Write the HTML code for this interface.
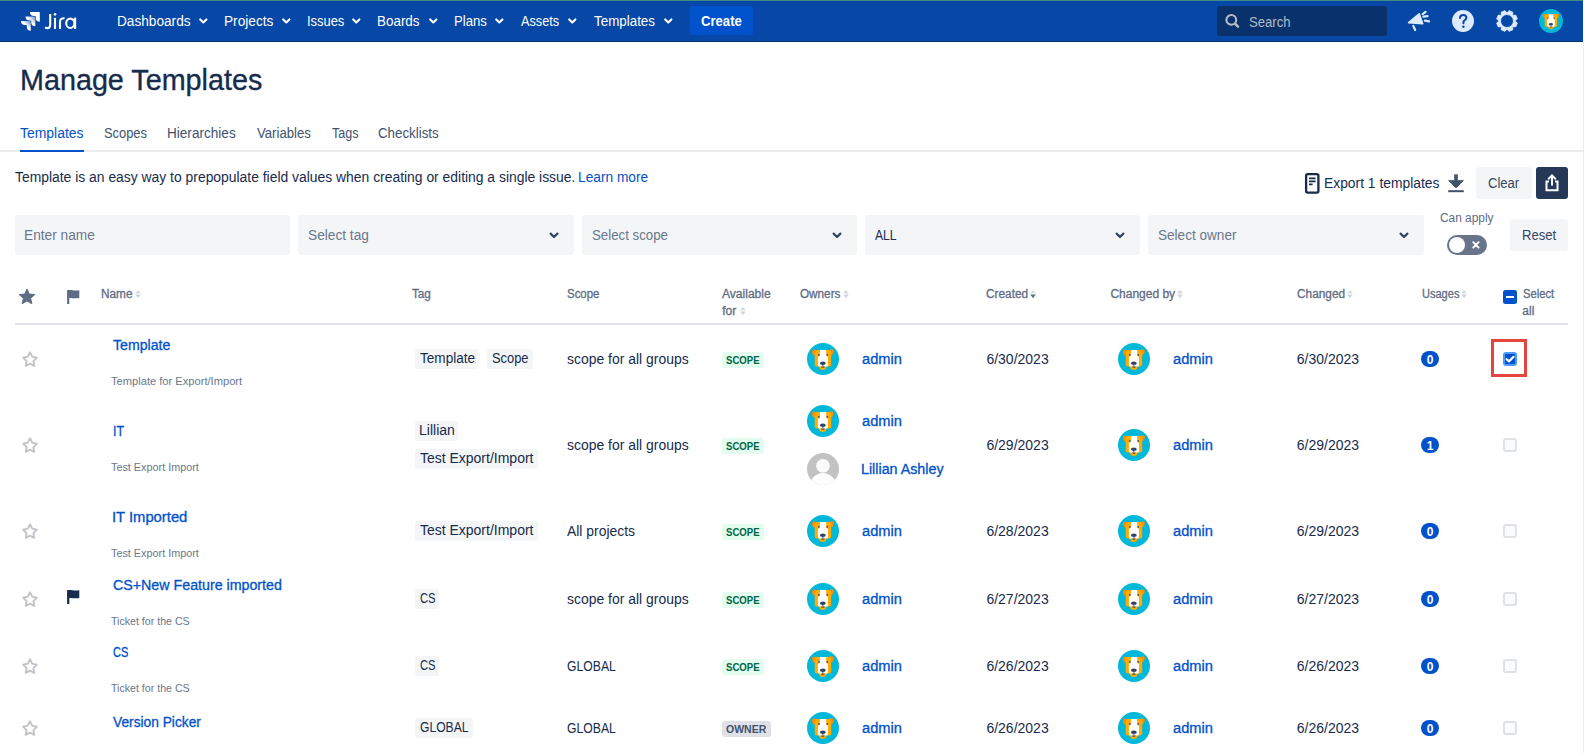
<!DOCTYPE html>
<html><head><meta charset="utf-8"><title>Manage Templates</title>
<style>
html,body{margin:0;padding:0;}
body{width:1584px;height:753px;overflow:hidden;position:relative;background:#fff;font-family:"Liberation Sans", sans-serif;}
.t{position:absolute;white-space:nowrap;}
.r{position:absolute;}
.s{position:absolute;overflow:visible;}
</style></head><body>
<div class="r" style="left:0px;top:0px;width:1583px;height:42px;background:#0747a6;border-radius:0px;"></div>
<div class="r" style="left:0px;top:0px;width:1583px;height:1px;background:#3f8a82;border-radius:0px;"></div>
<div class="r" style="left:0px;top:41px;width:1583px;height:1px;background:#083373;border-radius:0px;"></div>
<div class="r" style="left:1583px;top:42px;width:1px;height:711px;background:#ebecf0;border-radius:0px;"></div>
<svg class="s" style="left:21px;top:12.1px;" width="18.8" height="18.8" viewBox="0 0 24 24"><defs><linearGradient id="lg1" x1="0.98" y1="0.02" x2="0.4" y2="0.6"><stop offset="0.05" stop-color="#fff" stop-opacity="0.4"/><stop offset="0.75" stop-color="#fff"/></linearGradient></defs>
<path d="M23.013 0H11.455a5.215 5.215 0 0 0 5.215 5.215h2.129v2.057A5.215 5.215 0 0 0 24 12.483V1.005A1.001 1.001 0 0 0 23.013 0Z" fill="#fff"/>
<path transform="translate(5.736 5.757)" d="M11.558 0H0a5.215 5.215 0 0 0 5.215 5.214h2.129v2.058a5.218 5.218 0 0 0 5.215 5.214V1.001A1.001 1.001 0 0 0 11.558 0Z" fill="url(#lg1)"/>
<path transform="translate(0 11.513)" d="M11.571 0H0a5.218 5.218 0 0 0 5.232 5.215h2.13v2.057A5.215 5.215 0 0 0 12.575 12.487V1.005A1.005 1.005 0 0 0 11.571 0Z" fill="url(#lg1)"/></svg>
<svg class="s" style="left:40px;top:8px;" width="40" height="26" viewBox="0 0 40 26"><g fill="none" stroke="#fff" stroke-width="2.1"><path d="M10.2 6 V17 Q10.2 20.1 7.6 20.1 Q6 20.1 5.2 19.2"/><path d="M15 9.8 V21"/><path d="M20 21 V14 Q20 9.9 24.6 10.2"/><path d="M35.1 9.6 V21"/><ellipse cx="30.3" cy="15.3" rx="4.1" ry="4.7"/></g><circle cx="15" cy="6.3" r="1.35" fill="#fff"/></svg>
<div class="t " id="k0" style="left:116.73px;top:10.80px;font-size:14px;line-height:20px;color:#fff;font-weight:400;transform:scaleX(0.9746);transform-origin:0 50%;">Dashboards</div>
<svg class="s" style="left:199px;top:17.5px;" width="9" height="7" viewBox="0 0 9 7"><path d="M1.2 1.4 L4.3 4.5 L7.4 1.4" stroke="#fff" stroke-width="2.1" fill="none" stroke-linecap="round" stroke-linejoin="round"/></svg>
<div class="t " id="k1" style="left:223.82px;top:10.80px;font-size:14px;line-height:20px;color:#fff;font-weight:400;transform:scaleX(0.9764);transform-origin:0 50%;">Projects</div>
<svg class="s" style="left:282.3px;top:17.5px;" width="9" height="7" viewBox="0 0 9 7"><path d="M1.2 1.4 L4.3 4.5 L7.4 1.4" stroke="#fff" stroke-width="2.1" fill="none" stroke-linecap="round" stroke-linejoin="round"/></svg>
<div class="t " id="k2" style="left:306.68px;top:10.80px;font-size:14px;line-height:20px;color:#fff;font-weight:400;transform:scaleX(0.9224);transform-origin:0 50%;">Issues</div>
<svg class="s" style="left:352px;top:17.5px;" width="9" height="7" viewBox="0 0 9 7"><path d="M1.2 1.4 L4.3 4.5 L7.4 1.4" stroke="#fff" stroke-width="2.1" fill="none" stroke-linecap="round" stroke-linejoin="round"/></svg>
<div class="t " id="k3" style="left:377.44px;top:10.80px;font-size:14px;line-height:20px;color:#fff;font-weight:400;transform:scaleX(0.9594);transform-origin:0 50%;">Boards</div>
<svg class="s" style="left:429px;top:17.5px;" width="9" height="7" viewBox="0 0 9 7"><path d="M1.2 1.4 L4.3 4.5 L7.4 1.4" stroke="#fff" stroke-width="2.1" fill="none" stroke-linecap="round" stroke-linejoin="round"/></svg>
<div class="t " id="k4" style="left:453.76px;top:10.80px;font-size:14px;line-height:20px;color:#fff;font-weight:400;transform:scaleX(0.9377);transform-origin:0 50%;">Plans</div>
<svg class="s" style="left:495.3px;top:17.5px;" width="9" height="7" viewBox="0 0 9 7"><path d="M1.2 1.4 L4.3 4.5 L7.4 1.4" stroke="#fff" stroke-width="2.1" fill="none" stroke-linecap="round" stroke-linejoin="round"/></svg>
<div class="t " id="k5" style="left:520.90px;top:10.80px;font-size:14px;line-height:20px;color:#fff;font-weight:400;transform:scaleX(0.9068);transform-origin:0 50%;">Assets</div>
<svg class="s" style="left:568px;top:17.5px;" width="9" height="7" viewBox="0 0 9 7"><path d="M1.2 1.4 L4.3 4.5 L7.4 1.4" stroke="#fff" stroke-width="2.1" fill="none" stroke-linecap="round" stroke-linejoin="round"/></svg>
<div class="t " id="k6" style="left:594.30px;top:10.80px;font-size:14px;line-height:20px;color:#fff;font-weight:400;transform:scaleX(0.9560);transform-origin:0 50%;">Templates</div>
<svg class="s" style="left:664px;top:17.5px;" width="9" height="7" viewBox="0 0 9 7"><path d="M1.2 1.4 L4.3 4.5 L7.4 1.4" stroke="#fff" stroke-width="2.1" fill="none" stroke-linecap="round" stroke-linejoin="round"/></svg>
<div class="r" style="left:690px;top:6px;width:63px;height:29px;background:#0052cc;border-radius:3px;"></div>
<div class="t " id="k7" style="left:701.00px;top:11.00px;font-size:14px;line-height:20px;color:#fff;font-weight:700;transform:scaleX(0.9362);transform-origin:0 50%;">Create</div>
<div class="r" style="left:1217px;top:6px;width:170px;height:30px;background:#09326c;border-radius:3px;"></div>
<svg class="s" style="left:1224px;top:13px;" width="17" height="17" viewBox="0 0 17 17"><circle cx="7.3" cy="6.9" r="4.9" stroke="#b3bac5" stroke-width="2.1" fill="none"/><path d="M10.9 10.5 L14 13.6" stroke="#b3bac5" stroke-width="2.5" stroke-linecap="round"/></svg>
<div class="t " id="k8" style="left:1249.40px;top:11.50px;font-size:14px;line-height:20px;color:#b3bac5;font-weight:400;transform:scaleX(0.9364);transform-origin:0 50%;">Search</div>
<svg class="s" style="left:1406px;top:10px;" width="26" height="22" viewBox="0 0 26 22"><path d="M2.6 12.6 L13.2 3.8 L16.7 13.7 Z" fill="#deebff" stroke="#deebff" stroke-width="1.6" stroke-linejoin="round"/>
<path d="M7.3 15.9 L9.2 20" stroke="#deebff" stroke-width="2.2" stroke-linecap="round"/>
<path d="M16.6 4.2 L19.6 1.9 M17.4 6.7 L21.6 6.1 M18.9 10.7 L23.1 11.4" stroke="#deebff" stroke-width="2.2" stroke-linecap="round"/></svg>
<svg class="s" style="left:1452px;top:10px;" width="22" height="22" viewBox="0 0 22 22"><circle cx="11" cy="11" r="11" fill="#deebff"/><path d="M8 8.1 C8 6 9.4 4.9 11.2 4.9 C13 4.9 14.4 6 14.4 7.7 C14.4 9.6 12.2 10 11.5 11.7 L11.4 13.3" stroke="#0747a6" stroke-width="2" fill="none" stroke-linecap="round"/><circle cx="11.4" cy="16.7" r="1.25" fill="#0747a6"/></svg>
<svg class="s" style="left:1496px;top:10.3px;" width="22" height="22" viewBox="0 0 22 22"><path d="M19.67 11.68 L21.41 13.02 L19.79 16.93 L17.62 16.65 L16.65 17.62 L16.93 19.79 L13.02 21.41 L11.68 19.67 L10.32 19.67 L8.98 21.41 L5.07 19.79 L5.35 17.62 L4.38 16.65 L2.21 16.93 L0.59 13.02 L2.33 11.68 L2.33 10.32 L0.59 8.98 L2.21 5.07 L4.38 5.35 L5.35 4.38 L5.07 2.21 L8.98 0.59 L10.32 2.33 L11.68 2.33 L13.02 0.59 L16.93 2.21 L16.65 4.38 L17.62 5.35 L19.79 5.07 L21.41 8.98 L19.67 10.32Z M11 4.6 A6.4 6.4 0 1 0 11 17.4 A6.4 6.4 0 1 0 11 4.6 Z" fill="#deebff" fill-rule="evenodd" stroke="#deebff" stroke-width="0.7" stroke-linejoin="round"/></svg>
<svg class="s" style="left:1539px;top:9px;" width="24" height="24" viewBox="0 0 32 32"><circle cx="16" cy="16" r="16" fill="#00b8d9"/>
<ellipse cx="7.4" cy="9.6" rx="2.3" ry="3" transform="rotate(-20 7.4 9.6)" fill="#ff8b00"/><ellipse cx="24.3" cy="9.1" rx="2.3" ry="3" transform="rotate(20 24.3 9.1)" fill="#ff8b00"/>
<rect x="7.7" y="7" width="16.5" height="16.6" rx="2" fill="#ffab00"/>
<ellipse cx="15.8" cy="24.2" rx="3.5" ry="2.7" fill="#ffab00"/>
<path d="M13.1 7.1 H19.1 L19.3 11.5 Q19.6 13.5 21 13.9 V22.3 Q21 23.6 19.5 23.6 H12.4 Q10.9 23.6 10.9 22.3 V13.9 Q12.4 13.5 12.8 11.5 Z" fill="#fff"/>
<circle cx="11.9" cy="11.9" r="0.95" fill="#42526e"/><circle cx="20.2" cy="11.9" r="0.95" fill="#42526e"/>
<ellipse cx="15.9" cy="20.3" rx="2.9" ry="1.7" fill="#344563"/><path d="M15.9 21.5 V23.8 M14.2 23.9 Q15.9 25 17.6 23.9" stroke="#344563" stroke-width="0.9" fill="none"/></svg>
<div class="t " id="k9" style="left:20.32px;top:59.80px;font-size:29px;line-height:41px;color:#172b4d;font-weight:400;-webkit-text-stroke:0.35px #172b4d;transform:scaleX(0.9908);transform-origin:0 50%;">Manage Templates</div>
<div class="t " id="k10" style="left:20.30px;top:123.00px;font-size:14px;line-height:20px;color:#0052cc;font-weight:400;transform:scaleX(0.9968);transform-origin:0 50%;">Templates</div>
<div class="t " id="k11" style="left:104.30px;top:123.00px;font-size:14px;line-height:20px;color:#42526e;font-weight:400;transform:scaleX(0.9187);transform-origin:0 50%;">Scopes</div>
<div class="t " id="k12" style="left:167.43px;top:123.00px;font-size:14px;line-height:20px;color:#42526e;font-weight:400;transform:scaleX(0.9699);transform-origin:0 50%;">Hierarchies</div>
<div class="t " id="k13" style="left:256.80px;top:123.00px;font-size:14px;line-height:20px;color:#42526e;font-weight:400;transform:scaleX(0.9385);transform-origin:0 50%;">Variables</div>
<div class="t " id="k14" style="left:331.60px;top:123.00px;font-size:14px;line-height:20px;color:#42526e;font-weight:400;transform:scaleX(0.8961);transform-origin:0 50%;">Tags</div>
<div class="t " id="k15" style="left:378.30px;top:123.00px;font-size:14px;line-height:20px;color:#42526e;font-weight:400;transform:scaleX(0.9515);transform-origin:0 50%;">Checklists</div>
<div class="r" style="left:0px;top:150px;width:1583px;height:2px;background:#ebecf0;border-radius:0px;"></div>
<div class="r" style="left:20px;top:150px;width:64px;height:2px;background:#0052cc;border-radius:0px;"></div>
<div class="t " id="k16" style="left:14.60px;top:167.00px;font-size:14px;line-height:20px;color:#172b4d;font-weight:400;transform:scaleX(0.9918);transform-origin:0 50%;">Template is an easy way to prepopulate field values when creating or editing a single issue.</div>
<div class="t " id="k17" style="left:577.92px;top:167.00px;font-size:14px;line-height:20px;color:#0052cc;font-weight:400;transform:scaleX(0.9801);transform-origin:0 50%;">Learn more</div>
<svg class="s" style="left:1304.7px;top:172.6px;" width="15" height="21" viewBox="0 0 15 21"><rect x="1.1" y="1.1" width="12.3" height="18.6" rx="1.6" stroke="#172b4d" stroke-width="2.3" fill="none"/><path d="M4 5.3 H10.6 M4 8.3 H10.6 M4 11.3 H7.6" stroke="#172b4d" stroke-width="1.7"/></svg>
<div class="t " id="k18" style="left:1323.61px;top:173.00px;font-size:14px;line-height:20px;color:#172b4d;font-weight:400;transform:scaleX(0.9886);transform-origin:0 50%;">Export 1 templates</div>
<svg class="s" style="left:1447px;top:173px;" width="18" height="20" viewBox="0 0 18 20"><path d="M9 1.3 V10" stroke="#42526e" stroke-width="3.6"/><path d="M1.6 7.6 L9 15 L16.4 7.6 Z" fill="#42526e" stroke="#42526e" stroke-width="0.8" stroke-linejoin="round"/><rect x="1.2" y="17.2" width="15.6" height="2" fill="#42526e"/></svg>
<div class="r" style="left:1476px;top:167px;width:56px;height:32px;background:#f4f5f7;border-radius:3px;"></div>
<div class="t " id="k19" style="left:1488.00px;top:173.00px;font-size:14px;line-height:20px;color:#344563;font-weight:400;transform:scaleX(0.9321);transform-origin:0 50%;">Clear</div>
<div class="r" style="left:1536px;top:167px;width:32px;height:32px;background:#253858;border-radius:3px;"></div>
<svg class="s" style="left:1542px;top:173px;" width="20" height="20" viewBox="0 0 20 20"><path d="M10 2.5 V12.5" stroke="#fff" stroke-width="2"/><path d="M6.2 6.2 L10 2.4 L13.8 6.2" stroke="#fff" stroke-width="2" fill="none" stroke-linejoin="miter"/><path d="M7 8.5 H4.5 V17.3 H15.5 V8.5 H13" stroke="#fff" stroke-width="2" fill="none"/></svg>
<div class="r" style="left:15px;top:215px;width:275px;height:40px;background:#f4f5f7;border-radius:3px;"></div>
<div class="t " id="k20" style="left:24.32px;top:225.20px;font-size:14px;line-height:20px;color:#6b778c;font-weight:400;transform:scaleX(0.9778);transform-origin:0 50%;">Enter name</div>
<div class="r" style="left:298px;top:215px;width:276px;height:40px;background:#f4f5f7;border-radius:3px;"></div>
<div class="t " id="k21" style="left:308.30px;top:225.20px;font-size:14px;line-height:20px;color:#6b778c;font-weight:400;transform:scaleX(0.9776);transform-origin:0 50%;">Select tag</div>
<svg class="s" style="left:548.5px;top:232px;" width="10" height="8" viewBox="0 0 10 8"><path d="M1.6 1.6 L5 5 L8.4 1.6" stroke="#344563" stroke-width="2.2" fill="none" stroke-linecap="round" stroke-linejoin="round"/></svg>
<div class="r" style="left:582px;top:215px;width:275px;height:40px;background:#f4f5f7;border-radius:3px;"></div>
<div class="t " id="k22" style="left:592.30px;top:225.20px;font-size:14px;line-height:20px;color:#6b778c;font-weight:400;transform:scaleX(0.9468);transform-origin:0 50%;">Select scope</div>
<svg class="s" style="left:831.5px;top:232px;" width="10" height="8" viewBox="0 0 10 8"><path d="M1.6 1.6 L5 5 L8.4 1.6" stroke="#344563" stroke-width="2.2" fill="none" stroke-linecap="round" stroke-linejoin="round"/></svg>
<div class="r" style="left:865px;top:215px;width:275px;height:40px;background:#f4f5f7;border-radius:3px;"></div>
<div class="t " id="k23" style="left:875.30px;top:225.20px;font-size:14px;line-height:20px;color:#172b4d;font-weight:400;transform:scaleX(0.8677);transform-origin:0 50%;">ALL</div>
<svg class="s" style="left:1114.5px;top:232px;" width="10" height="8" viewBox="0 0 10 8"><path d="M1.6 1.6 L5 5 L8.4 1.6" stroke="#344563" stroke-width="2.2" fill="none" stroke-linecap="round" stroke-linejoin="round"/></svg>
<div class="r" style="left:1148px;top:215px;width:276px;height:40px;background:#f4f5f7;border-radius:3px;"></div>
<div class="t " id="k24" style="left:1158.30px;top:225.20px;font-size:14px;line-height:20px;color:#6b778c;font-weight:400;transform:scaleX(0.9696);transform-origin:0 50%;">Select owner</div>
<svg class="s" style="left:1398.5px;top:232px;" width="10" height="8" viewBox="0 0 10 8"><path d="M1.6 1.6 L5 5 L8.4 1.6" stroke="#344563" stroke-width="2.2" fill="none" stroke-linecap="round" stroke-linejoin="round"/></svg>
<div class="t " id="k25" style="left:1440.00px;top:209.50px;font-size:12px;line-height:17px;color:#5e6c84;font-weight:400;transform:scaleX(0.9901);transform-origin:0 50%;">Can apply</div>
<div class="r" style="left:1447px;top:235px;width:40px;height:20px;background:#67748a;border-radius:10px;"></div>
<div class="r" style="left:1449px;top:237px;width:16px;height:16px;border-radius:8px;background:#fff;"></div>
<svg class="s" style="left:1471px;top:240px;" width="10" height="10" viewBox="0 0 10 10"><path d="M2.2 2.2 L7.6 7.6 M7.6 2.2 L2.2 7.6" stroke="#fff" stroke-width="1.9" stroke-linecap="round"/></svg>
<div class="r" style="left:1510px;top:219px;width:58px;height:32px;background:#f4f5f7;border-radius:3px;"></div>
<div class="t " id="k26" style="left:1521.57px;top:225.00px;font-size:14px;line-height:20px;color:#344563;font-weight:400;transform:scaleX(0.9332);transform-origin:0 50%;">Reset</div>
<svg class="s" style="left:18px;top:288px;" width="18" height="17" viewBox="0 0 18 17"><path d="M9 1 L11.3 6.1 L16.8 6.6 L12.6 10.3 L13.9 15.8 L9 12.9 L4.1 15.8 L5.4 10.3 L1.2 6.6 L6.7 6.1 Z" fill="#5e6c84" stroke="#5e6c84" stroke-width="1" stroke-linejoin="round"/></svg>
<svg class="s" style="left:66px;top:289px;" width="15" height="16" viewBox="0 0 15 16"><path d="M2.2 1.2 V15" stroke="#5e6c84" stroke-width="2.2"/><path d="M1.6 1.2 C5 0.2 8 2.3 13.3 1.2 V9 C8 10 5 8.3 1.6 9.3 Z" fill="#5e6c84"/></svg>
<div class="t " id="k27" style="left:101.30px;top:285.80px;font-size:12px;line-height:17px;color:#5e6c84;font-weight:400;-webkit-text-stroke:0.3px #5e6c84;transform:scaleX(0.9834);transform-origin:0 50%;">Name</div>
<svg class="s" style="left:135.2px;top:289.8px;" width="6" height="9" viewBox="0 0 6 9"><path d="M0.2 3.3 L3 0.2 L5.8 3.3 Z" fill="#d0d4db"/><path d="M0.2 4.6 L3 8.3 L5.8 4.6 Z" fill="#d0d4db"/></svg>
<div class="t " id="k28" style="left:411.60px;top:285.80px;font-size:12px;line-height:17px;color:#5e6c84;font-weight:400;-webkit-text-stroke:0.3px #5e6c84;transform:scaleX(0.9746);transform-origin:0 50%;">Tag</div>
<div class="t " id="k29" style="left:566.70px;top:285.80px;font-size:12px;line-height:17px;color:#5e6c84;font-weight:400;-webkit-text-stroke:0.3px #5e6c84;transform:scaleX(0.9548);transform-origin:0 50%;">Scope</div>
<div class="t " id="k30" style="left:722.20px;top:285.80px;font-size:12px;line-height:17px;color:#5e6c84;font-weight:400;-webkit-text-stroke:0.3px #5e6c84;transform:scaleX(1.0040);transform-origin:0 50%;">Available</div>
<div class="t " style="left:722.20px;top:302.60px;font-size:12px;line-height:17px;color:#5e6c84;font-weight:400;-webkit-text-stroke:0.3px #5e6c84;">for</div>
<svg class="s" style="left:740.4px;top:306.8px;" width="6" height="9" viewBox="0 0 6 9"><path d="M0.2 3.3 L3 0.2 L5.8 3.3 Z" fill="#d0d4db"/><path d="M0.2 4.6 L3 8.3 L5.8 4.6 Z" fill="#d0d4db"/></svg>
<div class="t " id="k31" style="left:800.00px;top:285.80px;font-size:12px;line-height:17px;color:#5e6c84;font-weight:400;-webkit-text-stroke:0.3px #5e6c84;transform:scaleX(0.9772);transform-origin:0 50%;">Owners</div>
<svg class="s" style="left:843.4px;top:289.8px;" width="6" height="9" viewBox="0 0 6 9"><path d="M0.2 3.3 L3 0.2 L5.8 3.3 Z" fill="#d0d4db"/><path d="M0.2 4.6 L3 8.3 L5.8 4.6 Z" fill="#d0d4db"/></svg>
<div class="t " id="k32" style="left:986.20px;top:285.80px;font-size:12px;line-height:17px;color:#5e6c84;font-weight:400;-webkit-text-stroke:0.3px #5e6c84;transform:scaleX(0.9853);transform-origin:0 50%;">Created</div>
<svg class="s" style="left:1030px;top:289.6px;" width="6" height="9" viewBox="0 0 6 9"><path d="M0.2 3.3 L3 0.2 L5.8 3.3 Z" fill="#d0d4db"/><path d="M0.2 4.6 L3 8.3 L5.8 4.6 Z" fill="#5e6c84"/></svg>
<div class="t " id="k33" style="left:1110.40px;top:285.80px;font-size:12px;line-height:17px;color:#5e6c84;font-weight:400;-webkit-text-stroke:0.3px #5e6c84;">Changed by</div>
<svg class="s" style="left:1177.2px;top:289.8px;" width="6" height="9" viewBox="0 0 6 9"><path d="M0.2 3.3 L3 0.2 L5.8 3.3 Z" fill="#d0d4db"/><path d="M0.2 4.6 L3 8.3 L5.8 4.6 Z" fill="#d0d4db"/></svg>
<div class="t " id="k34" style="left:1296.90px;top:285.80px;font-size:12px;line-height:17px;color:#5e6c84;font-weight:400;-webkit-text-stroke:0.3px #5e6c84;transform:scaleX(0.9868);transform-origin:0 50%;">Changed</div>
<svg class="s" style="left:1347px;top:289.8px;" width="6" height="9" viewBox="0 0 6 9"><path d="M0.2 3.3 L3 0.2 L5.8 3.3 Z" fill="#d0d4db"/><path d="M0.2 4.6 L3 8.3 L5.8 4.6 Z" fill="#d0d4db"/></svg>
<div class="t " id="k35" style="left:1421.50px;top:285.80px;font-size:12px;line-height:17px;color:#5e6c84;font-weight:400;-webkit-text-stroke:0.3px #5e6c84;transform:scaleX(0.9192);transform-origin:0 50%;">Usages</div>
<svg class="s" style="left:1461.2px;top:289.8px;" width="6" height="9" viewBox="0 0 6 9"><path d="M0.2 3.3 L3 0.2 L5.8 3.3 Z" fill="#d0d4db"/><path d="M0.2 4.6 L3 8.3 L5.8 4.6 Z" fill="#d0d4db"/></svg>
<div class="r" style="left:1503px;top:290px;width:14px;height:14px;background:#0052cc;border-radius:2.5px;"></div>
<div class="r" style="left:1506px;top:296px;width:8px;height:2px;background:#fff;border-radius:0px;"></div>
<div class="t " id="k36" style="left:1522.80px;top:285.80px;font-size:12px;line-height:17px;color:#5e6c84;font-weight:400;-webkit-text-stroke:0.3px #5e6c84;transform:scaleX(0.9319);transform-origin:0 50%;">Select</div>
<div class="t " style="left:1522.30px;top:302.60px;font-size:12px;line-height:17px;color:#5e6c84;font-weight:400;-webkit-text-stroke:0.3px #5e6c84;">all</div>
<div class="r" style="left:15px;top:323px;width:1553px;height:2px;background:#dfe1e6;border-radius:0px;"></div>
<svg class="s" style="left:21px;top:350px;" width="18" height="18" viewBox="0 0 18 18"><path d="M9 2.3 L11.2 6.6 L15.9 7.7 L12.4 11.2 L13.2 15.9 L9 13.7 L4.8 15.9 L5.6 11.2 L2.1 7.7 L6.8 6.6 Z" fill="none" stroke="#c2c4c8" stroke-width="1.9" stroke-linejoin="round"/></svg>
<div class="t " id="k37" style="left:113.40px;top:335.00px;font-size:14px;line-height:20px;color:#0052cc;font-weight:400;-webkit-text-stroke:0.3px #0052cc;transform:scaleX(1.0102);transform-origin:0 50%;">Template</div>
<div class="t " id="k38" style="left:111.40px;top:373.50px;font-size:11px;line-height:15px;color:#6b778c;font-weight:400;transform:scaleX(1.0120);transform-origin:0 50%;">Template for Export/Import</div>
<div class="r" style="left:415.4px;top:348.5px;width:63px;height:20px;background:#f4f5f7;border-radius:3px;"></div>
<div class="t " id="k39" style="left:420.10px;top:347.90px;font-size:14px;line-height:20px;color:#172b4d;font-weight:400;transform:scaleX(0.9698);transform-origin:0 50%;">Template</div>
<div class="r" style="left:487.2px;top:348.5px;width:45.6px;height:20px;background:#f4f5f7;border-radius:3px;"></div>
<div class="t " id="k40" style="left:491.90px;top:347.90px;font-size:14px;line-height:20px;color:#172b4d;font-weight:400;transform:scaleX(0.9196);transform-origin:0 50%;">Scope</div>
<div class="t " id="k41" style="left:566.80px;top:349.00px;font-size:14px;line-height:20px;color:#172b4d;font-weight:400;transform:scaleX(0.9953);transform-origin:0 50%;">scope for all groups</div>
<div class="r" style="left:722px;top:352px;width:42px;height:15.6px;background:#e3fcef;border-radius:3px;"></div>
<div class="t " id="k42" style="left:726.20px;top:352.50px;font-size:11px;line-height:15px;color:#006644;font-weight:700;transform:scaleX(0.8723);transform-origin:0 50%;">SCOPE</div>
<svg class="s" style="left:807px;top:343px;" width="32" height="32" viewBox="0 0 32 32"><circle cx="16" cy="16" r="16" fill="#00b8d9"/>
<ellipse cx="7.4" cy="9.6" rx="2.3" ry="3" transform="rotate(-20 7.4 9.6)" fill="#ff8b00"/><ellipse cx="24.3" cy="9.1" rx="2.3" ry="3" transform="rotate(20 24.3 9.1)" fill="#ff8b00"/>
<rect x="7.7" y="7" width="16.5" height="16.6" rx="2" fill="#ffab00"/>
<ellipse cx="15.8" cy="24.2" rx="3.5" ry="2.7" fill="#ffab00"/>
<path d="M13.1 7.1 H19.1 L19.3 11.5 Q19.6 13.5 21 13.9 V22.3 Q21 23.6 19.5 23.6 H12.4 Q10.9 23.6 10.9 22.3 V13.9 Q12.4 13.5 12.8 11.5 Z" fill="#fff"/>
<circle cx="11.9" cy="11.9" r="0.95" fill="#42526e"/><circle cx="20.2" cy="11.9" r="0.95" fill="#42526e"/>
<ellipse cx="15.9" cy="20.3" rx="2.9" ry="1.7" fill="#344563"/><path d="M15.9 21.5 V23.8 M14.2 23.9 Q15.9 25 17.6 23.9" stroke="#344563" stroke-width="0.9" fill="none"/></svg>
<div class="t " id="k43" style="left:862.00px;top:349.00px;font-size:14px;line-height:20px;color:#0052cc;font-weight:400;-webkit-text-stroke:0.3px #0052cc;transform:scaleX(1.0470);transform-origin:0 50%;">admin</div>
<div class="t " id="k44" style="left:986.40px;top:349.00px;font-size:14px;line-height:20px;color:#172b4d;font-weight:400;">6/30/2023</div>
<svg class="s" style="left:1118px;top:343px;" width="32" height="32" viewBox="0 0 32 32"><circle cx="16" cy="16" r="16" fill="#00b8d9"/>
<ellipse cx="7.4" cy="9.6" rx="2.3" ry="3" transform="rotate(-20 7.4 9.6)" fill="#ff8b00"/><ellipse cx="24.3" cy="9.1" rx="2.3" ry="3" transform="rotate(20 24.3 9.1)" fill="#ff8b00"/>
<rect x="7.7" y="7" width="16.5" height="16.6" rx="2" fill="#ffab00"/>
<ellipse cx="15.8" cy="24.2" rx="3.5" ry="2.7" fill="#ffab00"/>
<path d="M13.1 7.1 H19.1 L19.3 11.5 Q19.6 13.5 21 13.9 V22.3 Q21 23.6 19.5 23.6 H12.4 Q10.9 23.6 10.9 22.3 V13.9 Q12.4 13.5 12.8 11.5 Z" fill="#fff"/>
<circle cx="11.9" cy="11.9" r="0.95" fill="#42526e"/><circle cx="20.2" cy="11.9" r="0.95" fill="#42526e"/>
<ellipse cx="15.9" cy="20.3" rx="2.9" ry="1.7" fill="#344563"/><path d="M15.9 21.5 V23.8 M14.2 23.9 Q15.9 25 17.6 23.9" stroke="#344563" stroke-width="0.9" fill="none"/></svg>
<div class="t " id="k45" style="left:1172.70px;top:349.00px;font-size:14px;line-height:20px;color:#0052cc;font-weight:400;-webkit-text-stroke:0.3px #0052cc;transform:scaleX(1.0470);transform-origin:0 50%;">admin</div>
<div class="t " id="k46" style="left:1296.80px;top:349.00px;font-size:14px;line-height:20px;color:#172b4d;font-weight:400;">6/30/2023</div>
<div class="r" style="left:1421px;top:351px;width:18px;height:16px;background:#0052cc;border-radius:8px;"></div>
<div class="t " style="left:1426.80px;top:351.80px;font-size:12px;line-height:17px;color:#fff;font-weight:700;">0</div>
<div class="r" style="left:1503px;top:352px;width:14px;height:14px;background:#4c9aff;border-radius:3px;"></div>
<div class="r" style="left:1505px;top:354px;width:10px;height:10px;background:#0052cc;border-radius:1px;"></div>
<svg class="s" style="left:1503px;top:352px;" width="14" height="14" viewBox="0 0 14 14"><path d="M3.6 7.2 L6 9.4 L10.6 4.8" stroke="#fff" stroke-width="2.2" fill="none" stroke-linecap="round" stroke-linejoin="round"/></svg>
<div class="r" style="left:1491px;top:339px;width:30px;height:32px;border:3px solid #e5453c;"></div>
<svg class="s" style="left:21px;top:436px;" width="18" height="18" viewBox="0 0 18 18"><path d="M9 2.3 L11.2 6.6 L15.9 7.7 L12.4 11.2 L13.2 15.9 L9 13.7 L4.8 15.9 L5.6 11.2 L2.1 7.7 L6.8 6.6 Z" fill="none" stroke="#c2c4c8" stroke-width="1.9" stroke-linejoin="round"/></svg>
<div class="t " id="k47" style="left:112.51px;top:421.00px;font-size:14px;line-height:20px;color:#0052cc;font-weight:400;-webkit-text-stroke:0.3px #0052cc;transform:scaleX(0.8915);transform-origin:0 50%;">IT</div>
<div class="t " id="k48" style="left:111.40px;top:459.80px;font-size:11px;line-height:15px;color:#6b778c;font-weight:400;transform:scaleX(0.9844);transform-origin:0 50%;">Test Export Import</div>
<div class="r" style="left:415.2px;top:420.8px;width:42.6px;height:20px;background:#f4f5f7;border-radius:3px;"></div>
<div class="t " id="k49" style="left:418.90px;top:420.20px;font-size:14px;line-height:20px;color:#172b4d;font-weight:400;transform:scaleX(1.0025);transform-origin:0 50%;">Lillian</div>
<div class="r" style="left:415.2px;top:448.8px;width:122.4px;height:20px;background:#f4f5f7;border-radius:3px;"></div>
<div class="t " id="k50" style="left:419.90px;top:448.20px;font-size:14px;line-height:20px;color:#172b4d;font-weight:400;">Test Export/Import</div>
<div class="t " id="k51" style="left:566.80px;top:435.00px;font-size:14px;line-height:20px;color:#172b4d;font-weight:400;transform:scaleX(0.9953);transform-origin:0 50%;">scope for all groups</div>
<div class="r" style="left:722px;top:438px;width:42px;height:15.6px;background:#e3fcef;border-radius:3px;"></div>
<div class="t " id="k52" style="left:726.20px;top:438.50px;font-size:11px;line-height:15px;color:#006644;font-weight:700;transform:scaleX(0.8723);transform-origin:0 50%;">SCOPE</div>
<svg class="s" style="left:807px;top:405px;" width="32" height="32" viewBox="0 0 32 32"><circle cx="16" cy="16" r="16" fill="#00b8d9"/>
<ellipse cx="7.4" cy="9.6" rx="2.3" ry="3" transform="rotate(-20 7.4 9.6)" fill="#ff8b00"/><ellipse cx="24.3" cy="9.1" rx="2.3" ry="3" transform="rotate(20 24.3 9.1)" fill="#ff8b00"/>
<rect x="7.7" y="7" width="16.5" height="16.6" rx="2" fill="#ffab00"/>
<ellipse cx="15.8" cy="24.2" rx="3.5" ry="2.7" fill="#ffab00"/>
<path d="M13.1 7.1 H19.1 L19.3 11.5 Q19.6 13.5 21 13.9 V22.3 Q21 23.6 19.5 23.6 H12.4 Q10.9 23.6 10.9 22.3 V13.9 Q12.4 13.5 12.8 11.5 Z" fill="#fff"/>
<circle cx="11.9" cy="11.9" r="0.95" fill="#42526e"/><circle cx="20.2" cy="11.9" r="0.95" fill="#42526e"/>
<ellipse cx="15.9" cy="20.3" rx="2.9" ry="1.7" fill="#344563"/><path d="M15.9 21.5 V23.8 M14.2 23.9 Q15.9 25 17.6 23.9" stroke="#344563" stroke-width="0.9" fill="none"/></svg>
<div class="t " id="k53" style="left:862.00px;top:411.00px;font-size:14px;line-height:20px;color:#0052cc;font-weight:400;-webkit-text-stroke:0.3px #0052cc;transform:scaleX(1.0470);transform-origin:0 50%;">admin</div>
<svg class="s" style="left:807px;top:453px;" width="32" height="32" viewBox="0 0 32 32"><defs><clipPath id="cpg"><circle cx="16" cy="16" r="16"/></clipPath></defs><circle cx="16" cy="16" r="16" fill="#c2c2c2"/><g clip-path="url(#cpg)"><circle cx="16" cy="12.8" r="6.9" fill="#fbfbfb"/><circle cx="16" cy="33" r="13" fill="#fdfdfd"/></g></svg>
<div class="t " id="k54" style="left:860.98px;top:459.00px;font-size:14px;line-height:20px;color:#0052cc;font-weight:400;-webkit-text-stroke:0.3px #0052cc;transform:scaleX(1.0197);transform-origin:0 50%;">Lillian Ashley</div>
<div class="t " id="k55" style="left:986.40px;top:435.00px;font-size:14px;line-height:20px;color:#172b4d;font-weight:400;">6/29/2023</div>
<svg class="s" style="left:1118px;top:429px;" width="32" height="32" viewBox="0 0 32 32"><circle cx="16" cy="16" r="16" fill="#00b8d9"/>
<ellipse cx="7.4" cy="9.6" rx="2.3" ry="3" transform="rotate(-20 7.4 9.6)" fill="#ff8b00"/><ellipse cx="24.3" cy="9.1" rx="2.3" ry="3" transform="rotate(20 24.3 9.1)" fill="#ff8b00"/>
<rect x="7.7" y="7" width="16.5" height="16.6" rx="2" fill="#ffab00"/>
<ellipse cx="15.8" cy="24.2" rx="3.5" ry="2.7" fill="#ffab00"/>
<path d="M13.1 7.1 H19.1 L19.3 11.5 Q19.6 13.5 21 13.9 V22.3 Q21 23.6 19.5 23.6 H12.4 Q10.9 23.6 10.9 22.3 V13.9 Q12.4 13.5 12.8 11.5 Z" fill="#fff"/>
<circle cx="11.9" cy="11.9" r="0.95" fill="#42526e"/><circle cx="20.2" cy="11.9" r="0.95" fill="#42526e"/>
<ellipse cx="15.9" cy="20.3" rx="2.9" ry="1.7" fill="#344563"/><path d="M15.9 21.5 V23.8 M14.2 23.9 Q15.9 25 17.6 23.9" stroke="#344563" stroke-width="0.9" fill="none"/></svg>
<div class="t " id="k56" style="left:1172.70px;top:435.00px;font-size:14px;line-height:20px;color:#0052cc;font-weight:400;-webkit-text-stroke:0.3px #0052cc;transform:scaleX(1.0470);transform-origin:0 50%;">admin</div>
<div class="t " id="k57" style="left:1296.80px;top:435.00px;font-size:14px;line-height:20px;color:#172b4d;font-weight:400;">6/29/2023</div>
<div class="r" style="left:1421px;top:437px;width:18px;height:16px;background:#0052cc;border-radius:8px;"></div>
<div class="t " style="left:1426.80px;top:437.80px;font-size:12px;line-height:17px;color:#fff;font-weight:700;">1</div>
<div class="r" style="left:1503.0px;top:438.2px;width:10px;height:10px;border:2px solid #dfe1e6;border-radius:3px;background:#fafbfc;"></div>
<svg class="s" style="left:21px;top:522px;" width="18" height="18" viewBox="0 0 18 18"><path d="M9 2.3 L11.2 6.6 L15.9 7.7 L12.4 11.2 L13.2 15.9 L9 13.7 L4.8 15.9 L5.6 11.2 L2.1 7.7 L6.8 6.6 Z" fill="none" stroke="#c2c4c8" stroke-width="1.9" stroke-linejoin="round"/></svg>
<div class="t " id="k58" style="left:112.34px;top:507.00px;font-size:14px;line-height:20px;color:#0052cc;font-weight:400;-webkit-text-stroke:0.3px #0052cc;transform:scaleX(1.0560);transform-origin:0 50%;">IT Imported</div>
<div class="t " id="k59" style="left:111.40px;top:545.80px;font-size:11px;line-height:15px;color:#6b778c;font-weight:400;transform:scaleX(0.9844);transform-origin:0 50%;">Test Export Import</div>
<div class="r" style="left:415.2px;top:520.5px;width:122.4px;height:20px;background:#f4f5f7;border-radius:3px;"></div>
<div class="t " id="k60" style="left:419.90px;top:519.90px;font-size:14px;line-height:20px;color:#172b4d;font-weight:400;">Test Export/Import</div>
<div class="t " id="k61" style="left:566.80px;top:521.00px;font-size:14px;line-height:20px;color:#172b4d;font-weight:400;transform:scaleX(0.9932);transform-origin:0 50%;">All projects</div>
<div class="r" style="left:722px;top:524px;width:42px;height:15.6px;background:#e3fcef;border-radius:3px;"></div>
<div class="t " id="k62" style="left:726.20px;top:524.50px;font-size:11px;line-height:15px;color:#006644;font-weight:700;transform:scaleX(0.8723);transform-origin:0 50%;">SCOPE</div>
<svg class="s" style="left:807px;top:515px;" width="32" height="32" viewBox="0 0 32 32"><circle cx="16" cy="16" r="16" fill="#00b8d9"/>
<ellipse cx="7.4" cy="9.6" rx="2.3" ry="3" transform="rotate(-20 7.4 9.6)" fill="#ff8b00"/><ellipse cx="24.3" cy="9.1" rx="2.3" ry="3" transform="rotate(20 24.3 9.1)" fill="#ff8b00"/>
<rect x="7.7" y="7" width="16.5" height="16.6" rx="2" fill="#ffab00"/>
<ellipse cx="15.8" cy="24.2" rx="3.5" ry="2.7" fill="#ffab00"/>
<path d="M13.1 7.1 H19.1 L19.3 11.5 Q19.6 13.5 21 13.9 V22.3 Q21 23.6 19.5 23.6 H12.4 Q10.9 23.6 10.9 22.3 V13.9 Q12.4 13.5 12.8 11.5 Z" fill="#fff"/>
<circle cx="11.9" cy="11.9" r="0.95" fill="#42526e"/><circle cx="20.2" cy="11.9" r="0.95" fill="#42526e"/>
<ellipse cx="15.9" cy="20.3" rx="2.9" ry="1.7" fill="#344563"/><path d="M15.9 21.5 V23.8 M14.2 23.9 Q15.9 25 17.6 23.9" stroke="#344563" stroke-width="0.9" fill="none"/></svg>
<div class="t " id="k63" style="left:862.00px;top:521.00px;font-size:14px;line-height:20px;color:#0052cc;font-weight:400;-webkit-text-stroke:0.3px #0052cc;transform:scaleX(1.0470);transform-origin:0 50%;">admin</div>
<div class="t " id="k64" style="left:986.40px;top:521.00px;font-size:14px;line-height:20px;color:#172b4d;font-weight:400;">6/28/2023</div>
<svg class="s" style="left:1118px;top:515px;" width="32" height="32" viewBox="0 0 32 32"><circle cx="16" cy="16" r="16" fill="#00b8d9"/>
<ellipse cx="7.4" cy="9.6" rx="2.3" ry="3" transform="rotate(-20 7.4 9.6)" fill="#ff8b00"/><ellipse cx="24.3" cy="9.1" rx="2.3" ry="3" transform="rotate(20 24.3 9.1)" fill="#ff8b00"/>
<rect x="7.7" y="7" width="16.5" height="16.6" rx="2" fill="#ffab00"/>
<ellipse cx="15.8" cy="24.2" rx="3.5" ry="2.7" fill="#ffab00"/>
<path d="M13.1 7.1 H19.1 L19.3 11.5 Q19.6 13.5 21 13.9 V22.3 Q21 23.6 19.5 23.6 H12.4 Q10.9 23.6 10.9 22.3 V13.9 Q12.4 13.5 12.8 11.5 Z" fill="#fff"/>
<circle cx="11.9" cy="11.9" r="0.95" fill="#42526e"/><circle cx="20.2" cy="11.9" r="0.95" fill="#42526e"/>
<ellipse cx="15.9" cy="20.3" rx="2.9" ry="1.7" fill="#344563"/><path d="M15.9 21.5 V23.8 M14.2 23.9 Q15.9 25 17.6 23.9" stroke="#344563" stroke-width="0.9" fill="none"/></svg>
<div class="t " id="k65" style="left:1172.70px;top:521.00px;font-size:14px;line-height:20px;color:#0052cc;font-weight:400;-webkit-text-stroke:0.3px #0052cc;transform:scaleX(1.0470);transform-origin:0 50%;">admin</div>
<div class="t " id="k66" style="left:1296.80px;top:521.00px;font-size:14px;line-height:20px;color:#172b4d;font-weight:400;">6/29/2023</div>
<div class="r" style="left:1421px;top:523px;width:18px;height:16px;background:#0052cc;border-radius:8px;"></div>
<div class="t " style="left:1426.80px;top:523.80px;font-size:12px;line-height:17px;color:#fff;font-weight:700;">0</div>
<div class="r" style="left:1503.0px;top:524.2px;width:10px;height:10px;border:2px solid #dfe1e6;border-radius:3px;background:#fafbfc;"></div>
<svg class="s" style="left:21px;top:590px;" width="18" height="18" viewBox="0 0 18 18"><path d="M9 2.3 L11.2 6.6 L15.9 7.7 L12.4 11.2 L13.2 15.9 L9 13.7 L4.8 15.9 L5.6 11.2 L2.1 7.7 L6.8 6.6 Z" fill="none" stroke="#c2c4c8" stroke-width="1.9" stroke-linejoin="round"/></svg>
<svg class="s" style="left:66px;top:589px;" width="15" height="16" viewBox="0 0 15 16"><path d="M2.2 1.2 V15" stroke="#172b4d" stroke-width="2.2"/><path d="M1.6 1.2 C5 0.2 8 2.3 13.3 1.2 V9 C8 10 5 8.3 1.6 9.3 Z" fill="#172b4d"/></svg>
<div class="t " id="k67" style="left:113.40px;top:575.10px;font-size:14px;line-height:20px;color:#0052cc;font-weight:400;-webkit-text-stroke:0.3px #0052cc;transform:scaleX(1.0167);transform-origin:0 50%;">CS+New Feature imported</div>
<div class="t " id="k68" style="left:111.40px;top:613.80px;font-size:11px;line-height:15px;color:#6b778c;font-weight:400;transform:scaleX(0.9646);transform-origin:0 50%;">Ticket for the CS</div>
<div class="r" style="left:415.3px;top:588.5px;width:23.3px;height:20px;background:#f4f5f7;border-radius:3px;"></div>
<div class="t " id="k69" style="left:420.00px;top:587.90px;font-size:14px;line-height:20px;color:#172b4d;font-weight:400;transform:scaleX(0.8006);transform-origin:0 50%;">CS</div>
<div class="t " id="k70" style="left:566.80px;top:589.00px;font-size:14px;line-height:20px;color:#172b4d;font-weight:400;transform:scaleX(0.9953);transform-origin:0 50%;">scope for all groups</div>
<div class="r" style="left:722px;top:592px;width:42px;height:15.6px;background:#e3fcef;border-radius:3px;"></div>
<div class="t " id="k71" style="left:726.20px;top:592.50px;font-size:11px;line-height:15px;color:#006644;font-weight:700;transform:scaleX(0.8723);transform-origin:0 50%;">SCOPE</div>
<svg class="s" style="left:807px;top:583px;" width="32" height="32" viewBox="0 0 32 32"><circle cx="16" cy="16" r="16" fill="#00b8d9"/>
<ellipse cx="7.4" cy="9.6" rx="2.3" ry="3" transform="rotate(-20 7.4 9.6)" fill="#ff8b00"/><ellipse cx="24.3" cy="9.1" rx="2.3" ry="3" transform="rotate(20 24.3 9.1)" fill="#ff8b00"/>
<rect x="7.7" y="7" width="16.5" height="16.6" rx="2" fill="#ffab00"/>
<ellipse cx="15.8" cy="24.2" rx="3.5" ry="2.7" fill="#ffab00"/>
<path d="M13.1 7.1 H19.1 L19.3 11.5 Q19.6 13.5 21 13.9 V22.3 Q21 23.6 19.5 23.6 H12.4 Q10.9 23.6 10.9 22.3 V13.9 Q12.4 13.5 12.8 11.5 Z" fill="#fff"/>
<circle cx="11.9" cy="11.9" r="0.95" fill="#42526e"/><circle cx="20.2" cy="11.9" r="0.95" fill="#42526e"/>
<ellipse cx="15.9" cy="20.3" rx="2.9" ry="1.7" fill="#344563"/><path d="M15.9 21.5 V23.8 M14.2 23.9 Q15.9 25 17.6 23.9" stroke="#344563" stroke-width="0.9" fill="none"/></svg>
<div class="t " id="k72" style="left:862.00px;top:589.00px;font-size:14px;line-height:20px;color:#0052cc;font-weight:400;-webkit-text-stroke:0.3px #0052cc;transform:scaleX(1.0470);transform-origin:0 50%;">admin</div>
<div class="t " id="k73" style="left:986.40px;top:589.00px;font-size:14px;line-height:20px;color:#172b4d;font-weight:400;">6/27/2023</div>
<svg class="s" style="left:1118px;top:583px;" width="32" height="32" viewBox="0 0 32 32"><circle cx="16" cy="16" r="16" fill="#00b8d9"/>
<ellipse cx="7.4" cy="9.6" rx="2.3" ry="3" transform="rotate(-20 7.4 9.6)" fill="#ff8b00"/><ellipse cx="24.3" cy="9.1" rx="2.3" ry="3" transform="rotate(20 24.3 9.1)" fill="#ff8b00"/>
<rect x="7.7" y="7" width="16.5" height="16.6" rx="2" fill="#ffab00"/>
<ellipse cx="15.8" cy="24.2" rx="3.5" ry="2.7" fill="#ffab00"/>
<path d="M13.1 7.1 H19.1 L19.3 11.5 Q19.6 13.5 21 13.9 V22.3 Q21 23.6 19.5 23.6 H12.4 Q10.9 23.6 10.9 22.3 V13.9 Q12.4 13.5 12.8 11.5 Z" fill="#fff"/>
<circle cx="11.9" cy="11.9" r="0.95" fill="#42526e"/><circle cx="20.2" cy="11.9" r="0.95" fill="#42526e"/>
<ellipse cx="15.9" cy="20.3" rx="2.9" ry="1.7" fill="#344563"/><path d="M15.9 21.5 V23.8 M14.2 23.9 Q15.9 25 17.6 23.9" stroke="#344563" stroke-width="0.9" fill="none"/></svg>
<div class="t " id="k74" style="left:1172.70px;top:589.00px;font-size:14px;line-height:20px;color:#0052cc;font-weight:400;-webkit-text-stroke:0.3px #0052cc;transform:scaleX(1.0470);transform-origin:0 50%;">admin</div>
<div class="t " id="k75" style="left:1296.80px;top:589.00px;font-size:14px;line-height:20px;color:#172b4d;font-weight:400;">6/27/2023</div>
<div class="r" style="left:1421px;top:591px;width:18px;height:16px;background:#0052cc;border-radius:8px;"></div>
<div class="t " style="left:1426.80px;top:591.80px;font-size:12px;line-height:17px;color:#fff;font-weight:700;">0</div>
<div class="r" style="left:1503.0px;top:592.2px;width:10px;height:10px;border:2px solid #dfe1e6;border-radius:3px;background:#fafbfc;"></div>
<svg class="s" style="left:21px;top:657px;" width="18" height="18" viewBox="0 0 18 18"><path d="M9 2.3 L11.2 6.6 L15.9 7.7 L12.4 11.2 L13.2 15.9 L9 13.7 L4.8 15.9 L5.6 11.2 L2.1 7.7 L6.8 6.6 Z" fill="none" stroke="#c2c4c8" stroke-width="1.9" stroke-linejoin="round"/></svg>
<div class="t " id="k76" style="left:113.40px;top:642.10px;font-size:14px;line-height:20px;color:#0052cc;font-weight:400;-webkit-text-stroke:0.3px #0052cc;transform:scaleX(0.7849);transform-origin:0 50%;">CS</div>
<div class="t " id="k77" style="left:111.40px;top:680.50px;font-size:11px;line-height:15px;color:#6b778c;font-weight:400;transform:scaleX(0.9646);transform-origin:0 50%;">Ticket for the CS</div>
<div class="r" style="left:415.3px;top:655.5px;width:23.3px;height:20px;background:#f4f5f7;border-radius:3px;"></div>
<div class="t " id="k78" style="left:420.00px;top:654.90px;font-size:14px;line-height:20px;color:#172b4d;font-weight:400;transform:scaleX(0.8006);transform-origin:0 50%;">CS</div>
<div class="t " id="k79" style="left:566.80px;top:656.00px;font-size:14px;line-height:20px;color:#172b4d;font-weight:400;transform:scaleX(0.8730);transform-origin:0 50%;">GLOBAL</div>
<div class="r" style="left:722px;top:659px;width:42px;height:15.6px;background:#e3fcef;border-radius:3px;"></div>
<div class="t " id="k80" style="left:726.20px;top:659.50px;font-size:11px;line-height:15px;color:#006644;font-weight:700;transform:scaleX(0.8723);transform-origin:0 50%;">SCOPE</div>
<svg class="s" style="left:807px;top:650px;" width="32" height="32" viewBox="0 0 32 32"><circle cx="16" cy="16" r="16" fill="#00b8d9"/>
<ellipse cx="7.4" cy="9.6" rx="2.3" ry="3" transform="rotate(-20 7.4 9.6)" fill="#ff8b00"/><ellipse cx="24.3" cy="9.1" rx="2.3" ry="3" transform="rotate(20 24.3 9.1)" fill="#ff8b00"/>
<rect x="7.7" y="7" width="16.5" height="16.6" rx="2" fill="#ffab00"/>
<ellipse cx="15.8" cy="24.2" rx="3.5" ry="2.7" fill="#ffab00"/>
<path d="M13.1 7.1 H19.1 L19.3 11.5 Q19.6 13.5 21 13.9 V22.3 Q21 23.6 19.5 23.6 H12.4 Q10.9 23.6 10.9 22.3 V13.9 Q12.4 13.5 12.8 11.5 Z" fill="#fff"/>
<circle cx="11.9" cy="11.9" r="0.95" fill="#42526e"/><circle cx="20.2" cy="11.9" r="0.95" fill="#42526e"/>
<ellipse cx="15.9" cy="20.3" rx="2.9" ry="1.7" fill="#344563"/><path d="M15.9 21.5 V23.8 M14.2 23.9 Q15.9 25 17.6 23.9" stroke="#344563" stroke-width="0.9" fill="none"/></svg>
<div class="t " id="k81" style="left:862.00px;top:656.00px;font-size:14px;line-height:20px;color:#0052cc;font-weight:400;-webkit-text-stroke:0.3px #0052cc;transform:scaleX(1.0470);transform-origin:0 50%;">admin</div>
<div class="t " id="k82" style="left:986.40px;top:656.00px;font-size:14px;line-height:20px;color:#172b4d;font-weight:400;">6/26/2023</div>
<svg class="s" style="left:1118px;top:650px;" width="32" height="32" viewBox="0 0 32 32"><circle cx="16" cy="16" r="16" fill="#00b8d9"/>
<ellipse cx="7.4" cy="9.6" rx="2.3" ry="3" transform="rotate(-20 7.4 9.6)" fill="#ff8b00"/><ellipse cx="24.3" cy="9.1" rx="2.3" ry="3" transform="rotate(20 24.3 9.1)" fill="#ff8b00"/>
<rect x="7.7" y="7" width="16.5" height="16.6" rx="2" fill="#ffab00"/>
<ellipse cx="15.8" cy="24.2" rx="3.5" ry="2.7" fill="#ffab00"/>
<path d="M13.1 7.1 H19.1 L19.3 11.5 Q19.6 13.5 21 13.9 V22.3 Q21 23.6 19.5 23.6 H12.4 Q10.9 23.6 10.9 22.3 V13.9 Q12.4 13.5 12.8 11.5 Z" fill="#fff"/>
<circle cx="11.9" cy="11.9" r="0.95" fill="#42526e"/><circle cx="20.2" cy="11.9" r="0.95" fill="#42526e"/>
<ellipse cx="15.9" cy="20.3" rx="2.9" ry="1.7" fill="#344563"/><path d="M15.9 21.5 V23.8 M14.2 23.9 Q15.9 25 17.6 23.9" stroke="#344563" stroke-width="0.9" fill="none"/></svg>
<div class="t " id="k83" style="left:1172.70px;top:656.00px;font-size:14px;line-height:20px;color:#0052cc;font-weight:400;-webkit-text-stroke:0.3px #0052cc;transform:scaleX(1.0470);transform-origin:0 50%;">admin</div>
<div class="t " id="k84" style="left:1296.80px;top:656.00px;font-size:14px;line-height:20px;color:#172b4d;font-weight:400;">6/26/2023</div>
<div class="r" style="left:1421px;top:658px;width:18px;height:16px;background:#0052cc;border-radius:8px;"></div>
<div class="t " style="left:1426.80px;top:658.80px;font-size:12px;line-height:17px;color:#fff;font-weight:700;">0</div>
<div class="r" style="left:1503.0px;top:659.2px;width:10px;height:10px;border:2px solid #dfe1e6;border-radius:3px;background:#fafbfc;"></div>
<svg class="s" style="left:21px;top:719px;" width="18" height="18" viewBox="0 0 18 18"><path d="M9 2.3 L11.2 6.6 L15.9 7.7 L12.4 11.2 L13.2 15.9 L9 13.7 L4.8 15.9 L5.6 11.2 L2.1 7.7 L6.8 6.6 Z" fill="none" stroke="#c2c4c8" stroke-width="1.9" stroke-linejoin="round"/></svg>
<div class="t " id="k85" style="left:113.40px;top:712.00px;font-size:14px;line-height:20px;color:#0052cc;font-weight:400;-webkit-text-stroke:0.3px #0052cc;transform:scaleX(0.9820);transform-origin:0 50%;">Version Picker</div>
<div class="r" style="left:415.1px;top:717.5px;width:57.6px;height:20px;background:#f4f5f7;border-radius:3px;"></div>
<div class="t " id="k86" style="left:419.80px;top:716.90px;font-size:14px;line-height:20px;color:#172b4d;font-weight:400;transform:scaleX(0.8659);transform-origin:0 50%;">GLOBAL</div>
<div class="t " id="k87" style="left:566.80px;top:718.00px;font-size:14px;line-height:20px;color:#172b4d;font-weight:400;transform:scaleX(0.8730);transform-origin:0 50%;">GLOBAL</div>
<div class="r" style="left:722px;top:721px;width:48.7px;height:15.6px;background:#dfe1e6;border-radius:3px;"></div>
<div class="t " id="k88" style="left:726.20px;top:721.50px;font-size:11px;line-height:15px;color:#42526e;font-weight:700;transform:scaleX(0.9545);transform-origin:0 50%;">OWNER</div>
<svg class="s" style="left:807px;top:712px;" width="32" height="32" viewBox="0 0 32 32"><circle cx="16" cy="16" r="16" fill="#00b8d9"/>
<ellipse cx="7.4" cy="9.6" rx="2.3" ry="3" transform="rotate(-20 7.4 9.6)" fill="#ff8b00"/><ellipse cx="24.3" cy="9.1" rx="2.3" ry="3" transform="rotate(20 24.3 9.1)" fill="#ff8b00"/>
<rect x="7.7" y="7" width="16.5" height="16.6" rx="2" fill="#ffab00"/>
<ellipse cx="15.8" cy="24.2" rx="3.5" ry="2.7" fill="#ffab00"/>
<path d="M13.1 7.1 H19.1 L19.3 11.5 Q19.6 13.5 21 13.9 V22.3 Q21 23.6 19.5 23.6 H12.4 Q10.9 23.6 10.9 22.3 V13.9 Q12.4 13.5 12.8 11.5 Z" fill="#fff"/>
<circle cx="11.9" cy="11.9" r="0.95" fill="#42526e"/><circle cx="20.2" cy="11.9" r="0.95" fill="#42526e"/>
<ellipse cx="15.9" cy="20.3" rx="2.9" ry="1.7" fill="#344563"/><path d="M15.9 21.5 V23.8 M14.2 23.9 Q15.9 25 17.6 23.9" stroke="#344563" stroke-width="0.9" fill="none"/></svg>
<div class="t " id="k89" style="left:862.00px;top:718.00px;font-size:14px;line-height:20px;color:#0052cc;font-weight:400;-webkit-text-stroke:0.3px #0052cc;transform:scaleX(1.0470);transform-origin:0 50%;">admin</div>
<div class="t " id="k90" style="left:986.40px;top:718.00px;font-size:14px;line-height:20px;color:#172b4d;font-weight:400;">6/26/2023</div>
<svg class="s" style="left:1118px;top:712px;" width="32" height="32" viewBox="0 0 32 32"><circle cx="16" cy="16" r="16" fill="#00b8d9"/>
<ellipse cx="7.4" cy="9.6" rx="2.3" ry="3" transform="rotate(-20 7.4 9.6)" fill="#ff8b00"/><ellipse cx="24.3" cy="9.1" rx="2.3" ry="3" transform="rotate(20 24.3 9.1)" fill="#ff8b00"/>
<rect x="7.7" y="7" width="16.5" height="16.6" rx="2" fill="#ffab00"/>
<ellipse cx="15.8" cy="24.2" rx="3.5" ry="2.7" fill="#ffab00"/>
<path d="M13.1 7.1 H19.1 L19.3 11.5 Q19.6 13.5 21 13.9 V22.3 Q21 23.6 19.5 23.6 H12.4 Q10.9 23.6 10.9 22.3 V13.9 Q12.4 13.5 12.8 11.5 Z" fill="#fff"/>
<circle cx="11.9" cy="11.9" r="0.95" fill="#42526e"/><circle cx="20.2" cy="11.9" r="0.95" fill="#42526e"/>
<ellipse cx="15.9" cy="20.3" rx="2.9" ry="1.7" fill="#344563"/><path d="M15.9 21.5 V23.8 M14.2 23.9 Q15.9 25 17.6 23.9" stroke="#344563" stroke-width="0.9" fill="none"/></svg>
<div class="t " id="k91" style="left:1172.70px;top:718.00px;font-size:14px;line-height:20px;color:#0052cc;font-weight:400;-webkit-text-stroke:0.3px #0052cc;transform:scaleX(1.0470);transform-origin:0 50%;">admin</div>
<div class="t " id="k92" style="left:1296.80px;top:718.00px;font-size:14px;line-height:20px;color:#172b4d;font-weight:400;">6/26/2023</div>
<div class="r" style="left:1421px;top:720px;width:18px;height:16px;background:#0052cc;border-radius:8px;"></div>
<div class="t " style="left:1426.80px;top:720.80px;font-size:12px;line-height:17px;color:#fff;font-weight:700;">0</div>
<div class="r" style="left:1503.0px;top:721.2px;width:10px;height:10px;border:2px solid #dfe1e6;border-radius:3px;background:#fafbfc;"></div>
</body></html>
